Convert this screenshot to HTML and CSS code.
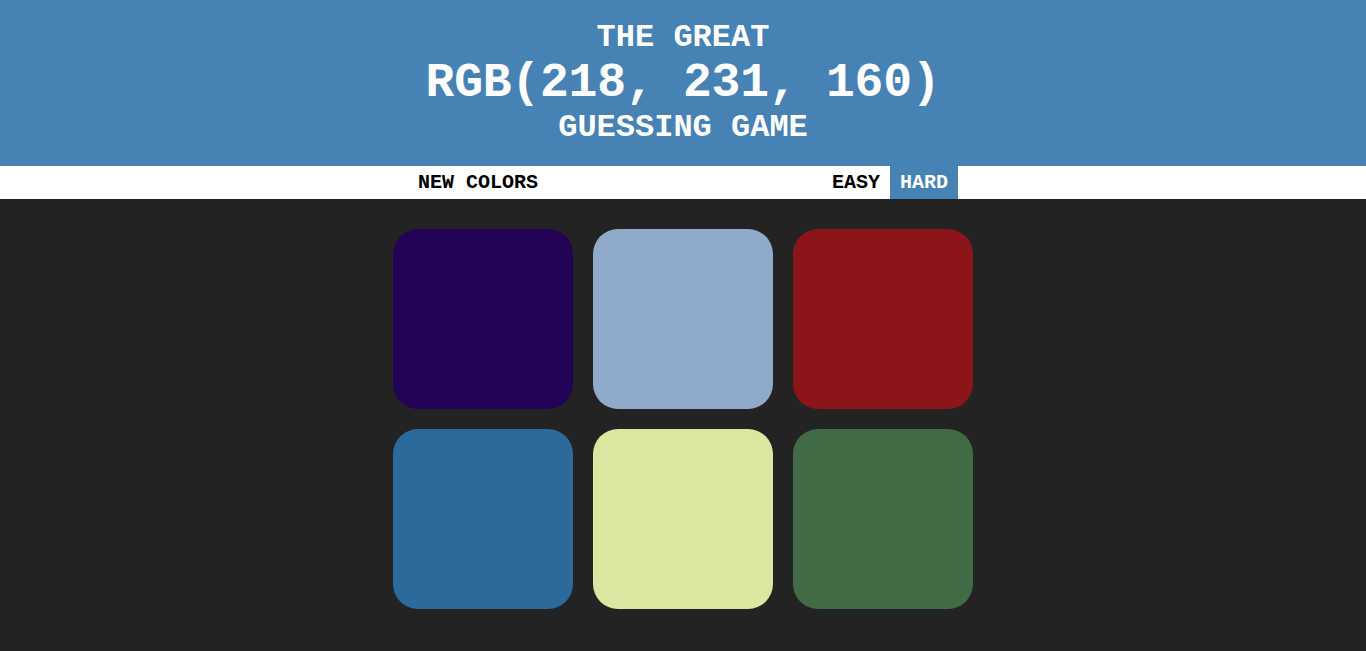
FILE: index.html
```html
<!DOCTYPE html>
<html>
<head>
<meta charset="utf-8">
<title>Color Game</title>
<link rel="stylesheet" href="styles.css">
</head>
<body>
<h1 class="title">
  <span class="title-line">The Great</span>
  <span class="title-rgb">RGB(218, 231, 160)</span>
  <span class="title-line">Guessing Game</span>
</h1>
<div class="stripe">
  <div class="stripe-inner">
    <button class="btn">New Colors</button>
    <div class="modes">
      <button class="btn">Easy</button>
      <button class="btn selected">Hard</button>
    </div>
  </div>
</div>
<div class="board">
  <div class="square sq1"></div>
  <div class="square sq2"></div>
  <div class="square sq3"></div>
  <div class="square sq4"></div>
  <div class="square sq5"></div>
  <div class="square sq6"></div>
</div>
</body>
</html>
```

FILE: styles.css
```css
html, body {
  margin: 0;
  padding: 0;
}
body {
  background: #232323;
  font-family: "Liberation Mono", "Courier New", monospace;
  height: 651px;
  overflow: hidden;
}
.title {
  margin: 0;
  padding: 20px 0;
  background: #4682b4;
  color: #fff;
  text-align: center;
  text-transform: uppercase;
  font-weight: 700;
  font-size: 32px;
  line-height: 1.125;
}
.title-line, .title-rgb {
  display: block;
}
.title-rgb {
  font-size: 48px;
  letter-spacing: -0.2px;
}
.stripe {
  background: #fff;
  height: 33px;
}
.stripe-inner {
  width: 550px;
  height: 100%;
  margin: 0 auto;
  display: flex;
  justify-content: space-between;
}
.modes {
  display: flex;
}
.btn {
  border: none;
  background: none;
  margin: 0;
  padding: 0 10px;
  height: 100%;
  font-family: "Liberation Mono", "Courier New", monospace;
  font-weight: 700;
  font-size: 20px;
  text-transform: uppercase;
  color: #000;
}
.btn.selected {
  background: #4682b4;
  color: #fff;
}
.board {
  width: 600px;
  margin: 20px auto 0;
  display: flex;
  flex-wrap: wrap;
}
.square {
  width: 180px;
  height: 180px;
  margin: 10px;
  border-radius: 25px;
}
.sq1 { background: #220355; }
.sq2 { background: #8faaca; }
.sq3 { background: #8b1518; }
.sq4 { background: #2b6a9b; }
.sq5 { background: #dae7a0; }
.sq6 { background: #416b45; }
```
